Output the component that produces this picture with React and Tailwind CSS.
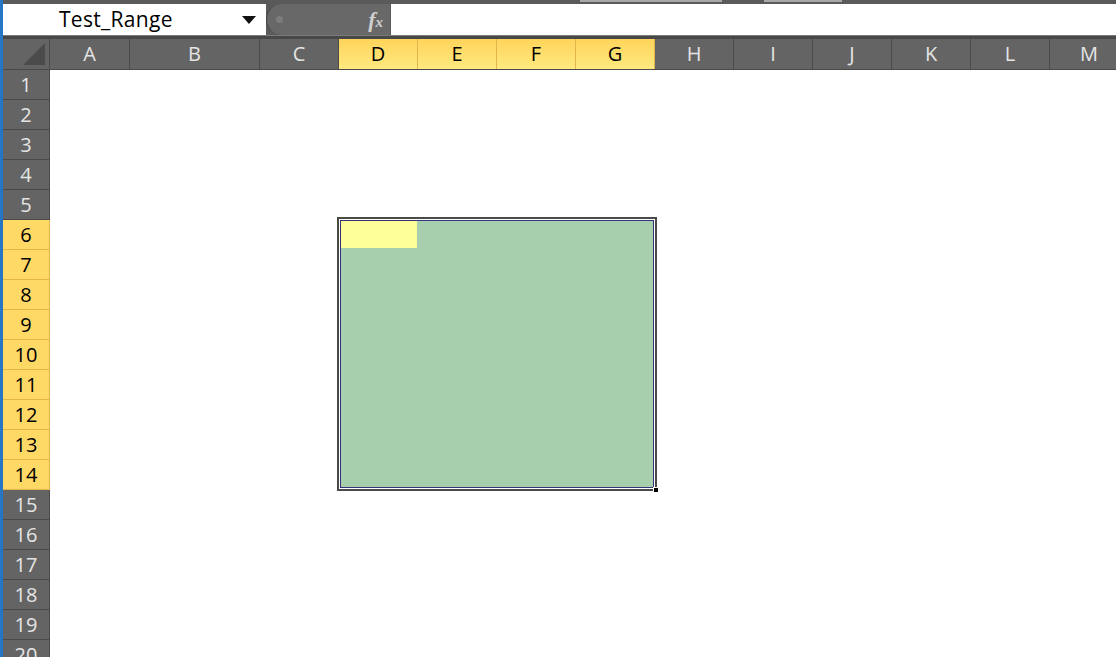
import React from 'react';

const columns = [
  { label: 'A', w: 80 },
  { label: 'B', w: 130 },
  { label: 'C', w: 79 },
  { label: 'D', w: 79, sel: true },
  { label: 'E', w: 79, sel: true },
  { label: 'F', w: 79, sel: true },
  { label: 'G', w: 79, sel: true },
  { label: 'H', w: 79 },
  { label: 'I', w: 79 },
  { label: 'J', w: 79 },
  { label: 'K', w: 79 },
  { label: 'L', w: 79 },
  { label: 'M', w: 79 },
];

const rows = Array.from({ length: 20 }, (_, i) => i + 1);

const ColumnHeader = ({ label, w, sel }) => (
  <div
    style={{ width: w }}
    className={
      sel
        ? 'shrink-0 h-full flex items-center justify-center border-r border-[#e3b449] bg-gradient-to-b from-[#ffd45a] to-[#ffe97f] text-black'
        : 'shrink-0 h-full flex items-center justify-center border-r border-[#4a4a4a] bg-[#646464] text-[#e4e4e4]'
    }
  >
    <span className="text-[20px] leading-none">{label}</span>
  </div>
);

const RowHeader = ({ n }) => {
  const sel = n >= 6 && n <= 14;
  return (
    <div
      className={
        sel
          ? 'h-[30px] shrink-0 flex items-center justify-center border-b border-r border-[#e3b449] bg-[#ffd966] text-black'
          : 'h-[30px] shrink-0 flex items-center justify-center border-b border-r border-[#4a4a4a] bg-[#646464] text-[#e4e4e4]'
      }
    >
      <span className="text-[20px] leading-none">{n}</span>
    </div>
  );
};

const App = () => {
  return (
    <div
      className="w-[1116px] h-[657px] overflow-hidden bg-white flex"
      style={{ fontFamily: '"Open Sans", "Noto Sans", sans-serif' }}
    >
      {/* window edge */}
      <div className="w-[3px] shrink-0 bg-[#2577c6]" />

      <div className="flex-1 flex flex-col min-w-0">
        {/* ribbon remnant */}
        <div className="h-[4px] shrink-0 bg-[#5a5a5a] flex">
          <div className="w-[577px] shrink-0" />
          <div className="w-[142px] h-[2px] bg-[#a9a9a9]" />
          <div className="w-[42px] shrink-0" />
          <div className="w-[78px] h-[2px] bg-[#a9a9a9]" />
        </div>

        {/* formula bar */}
        <div className="h-[31px] shrink-0 flex bg-[#5a5a5a]">
          <div className="w-[263px] shrink-0 bg-white flex items-center pl-[56px] pr-[10px]">
            <span className="text-[21px] text-black leading-none flex-1 tracking-[0.3px]">Test_Range</span>
            <svg width="14" height="8" viewBox="0 0 14 8">
              <path d="M0 0 L14 0 L7 8 Z" fill="#111" />
            </svg>
          </div>
          <div className="w-[124px] shrink-0 bg-[#686868] rounded-l-full flex items-center pl-[9px] pr-[7px] border-l border-[#444]">
            <div className="w-[7px] h-[7px] rounded-full bg-[#7d7d7d]" />
            <div className="flex-1" />
            <span
              className="text-[#d0d0d0] text-[22px] italic font-bold leading-none"
              style={{ fontFamily: '"Liberation Serif", serif' }}
            >
              f<span className="text-[15px]">x</span>
            </span>
          </div>
          <div className="flex-1 bg-white ml-[1px]" />
        </div>

        <div className="h-[4px] shrink-0 bg-[#484848] border-t border-[#7a7a7a]" />

        {/* column headers */}
        <div className="h-[31px] shrink-0 flex border-b border-[#4a4a4a] bg-[#646464]">
          <div className="w-[47px] shrink-0 h-full border-r border-[#4a4a4a] bg-[#646464] relative">
            <svg className="absolute right-[4px] bottom-[4px]" width="22" height="22" viewBox="0 0 22 22">
              <path d="M22 0 L22 22 L0 22 Z" fill="#4b4b4b" />
            </svg>
          </div>
          {columns.map((c) => (
            <ColumnHeader key={c.label} {...c} />
          ))}
        </div>

        {/* body */}
        <div className="flex-1 flex min-h-0">
          <div className="w-[47px] shrink-0 flex flex-col">
            {rows.map((n) => (
              <RowHeader key={n} n={n} />
            ))}
          </div>
          <div className="flex-1 relative bg-white">
            {/* selection D6:G14 */}
            <div className="absolute left-[287px] top-[147px] w-[320px] h-[274px] border-2 border-[#4a4a4a] bg-white p-[1px]">
              <div className="w-full h-full border border-[#34347a] bg-[#a8cfad] flex flex-col">
                <div className="w-[76px] h-[27px] bg-[#ffff99]" />
              </div>
              <div className="absolute right-[-4px] bottom-[-4px] w-[6px] h-[6px] bg-black border border-white" />
            </div>
          </div>
        </div>
      </div>
    </div>
  );
};

export default App;
